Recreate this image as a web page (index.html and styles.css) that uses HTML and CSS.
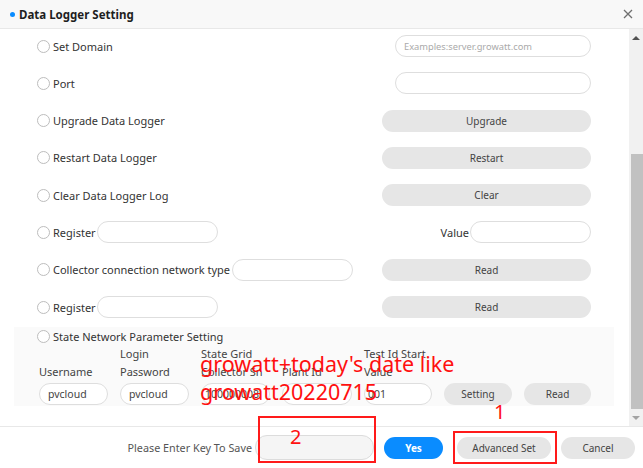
FILE: index.html
```html
<!DOCTYPE html>
<html>
<head>
<meta charset="utf-8">
<link rel="stylesheet" href="styles.css">
</head>
<body>
<div class="dialog">
  <header class="head">
    <span class="dot"></span>
    <span class="title">Data Logger Setting</span>
    <svg class="close" width="10" height="10" viewBox="0 0 10 10"><path d="M1 1L9 9M9 1L1 9" stroke="#6f6f6f" stroke-width="1.3" fill="none"/></svg>
  </header>
  <div class="main">
    <div class="content">
      <div class="row">
        <div class="left"><span class="radio"></span><span>Set Domain</span></div>
        <div class="field w196 ph">Examples:server.growatt.com</div>
      </div>
      <div class="row">
        <div class="left"><span class="radio"></span><span>Port</span></div>
        <div class="field w196"></div>
      </div>
      <div class="row">
        <div class="left"><span class="radio"></span><span>Upgrade Data Logger</span></div>
        <div class="btn w209">Upgrade</div>
      </div>
      <div class="row">
        <div class="left"><span class="radio"></span><span>Restart Data Logger</span></div>
        <div class="btn w209">Restart</div>
      </div>
      <div class="row">
        <div class="left"><span class="radio"></span><span>Clear Data Logger Log</span></div>
        <div class="btn w209">Clear</div>
      </div>
      <div class="row">
        <div class="left"><span class="radio"></span><span>Register</span><div class="field w121 ml1"></div></div>
        <div class="left"><span>Value</span><div class="field w121 ml1"></div></div>
      </div>
      <div class="row">
        <div class="left"><span class="radio"></span><span>Collector connection network type</span><div class="field w121 ml2"></div></div>
        <div class="btn w209">Read</div>
      </div>
      <div class="row last">
        <div class="left"><span class="radio"></span><span>Register</span><div class="field w121 ml1"></div></div>
        <div class="btn w209">Read</div>
      </div>
      <div class="section">
        <div class="left sec-head"><span class="radio"></span><span>State Network Parameter Setting</span></div>
        <div class="grid">
          <div class="cell"><div class="lbl">Username</div><div class="field box">pvcloud</div></div>
          <div class="cell"><div class="lbl">Login<br>Password</div><div class="field box">pvcloud</div></div>
          <div class="cell"><div class="lbl">State Grid<br>Collector Sn</div><div class="field box tight">100000008</div></div>
          <div class="cell"><div class="lbl">Plant Id</div><div class="field box"></div></div>
          <div class="cell"><div class="lbl">Test Id Start<br>Value</div><div class="field box tight">001</div></div>
          <div class="cell"><div class="btn">Setting</div></div>
          <div class="cell"><div class="btn">Read</div></div>
        </div>
      </div>
    </div>
    <div class="scrollbar">
      <div class="arrow"><span class="tri up"></span></div>
      <div class="track"></div>
      <div class="thumb"></div>
      <div class="arrow"><span class="tri down"></span></div>
    </div>
  </div>
  <footer class="foot">
    <span class="key-label">Please Enter Key To Save</span>
    <div class="key-input"></div>
    <div class="fbtn yes">Yes</div>
    <div class="fbtn adv">Advanced Set</div>
    <div class="fbtn cancel">Cancel</div>
  </footer>

  <div class="annot">growatt+today's date like<br>growatt20220715</div>
  <div class="mark mark1"></div>
  <div class="mark mark2"></div>
  <div class="num num1">1</div>
  <div class="num num2">2</div>
</div>
</body>
</html>
```
FILE: styles.css
```css
body {
  margin: 0;
  font-family: "Noto Sans", "Open Sans", sans-serif;
  color: #333;
  background: #fff;
}
.dialog {
  position: relative;
  width: 643px;
  height: 468px;
  display: flex;
  flex-direction: column;
  overflow: hidden;
  background: #fff;
}
.head {
  height: 28px;
  flex: none;
  border-bottom: 1px solid #e8e8e8;
  background: #f8f8f8;
  display: flex;
  align-items: center;
  padding: 0 10px 0 10px;
}
.dot {
  width: 5px;
  height: 5px;
  border-radius: 50%;
  background: #0a8cff;
  margin-right: 4px;
}
.title {
  flex: 1;
  font-weight: 700;
  font-size: 11.5px;
  color: #1e1e1e;
}

.main {
  height: 397px;
  flex: none;
  display: flex;
}
.content {
  flex: 1;
  padding: 6px 15px 0 14px;
  font-size: 11px;
}
.row {
  height: 22px;
  display: flex;
  align-items: center;
  justify-content: space-between;
  padding: 0 23px;
  margin-bottom: 15.3px;
}
.row.last { margin-bottom: 9px; }
.left {
  display: flex;
  align-items: center;
}
.radio {
  width: 13px;
  height: 13px;
  border: 1px solid #bdbdbd;
  border-radius: 50%;
  box-sizing: border-box;
  margin-right: 3px;
  background: #fff;
}
.field {
  height: 22px;
  border: 1px solid #dedede;
  border-radius: 11px;
  box-sizing: border-box;
  background: #fff;
  display: flex;
  align-items: center;
  padding-left: 8px;
  font-size: 10.5px;
  color: #444;
}
.ph { color: #aaa; font-size: 9.3px; }
.w196 { width: 196px; }
.w121 { width: 121px; }
.ml1 { margin-left: 1px; }
.ml2 { margin-left: 2px; }
.btn {
  height: 22px;
  border-radius: 11px;
  background: #e6e6e6;
  display: flex;
  align-items: center;
  justify-content: center;
  font-size: 10px;
  color: #444;
}
.w209 { width: 209px; }

.section {
  background: #fafafa;
  height: 79px;
  padding: 0 23px;
}
.sec-head { height: 18px; }
.grid {
  display: grid;
  grid-template-columns: 69px 69px 69px 70px 68px 68px 67px;
  column-gap: 12px;
  margin-left: 2px;
  align-items: end;
}
.lbl {
  height: 36px;
  line-height: 18px;
  display: flex;
  flex-direction: column;
  justify-content: flex-end;
  font-size: 11px;
  color: #444;
}
.box { margin-top: 2px; }
.tight { padding-left: 3px; }
.cell .btn { margin-top: 2px; }

.scrollbar {
  width: 14px;
  flex: none;
  background: #f1f1f1;
  display: flex;
  flex-direction: column;
}
.arrow {
  height: 17px;
  display: flex;
  align-items: center;
  justify-content: center;
}
.track { flex: 1; }
.thumb {
  height: 255px;
  margin-left: 2px;
  background: #c1c1c1;
}
.tri {
  width: 0;
  height: 0;
  border-left: 4px solid transparent;
  border-right: 4px solid transparent;
}
.tri.up { border-bottom: 4px solid #505050; }
.tri.down { border-top: 4px solid #a3a3a3; }

.foot {
  flex: 1;
  border-top: 1px solid #e8e8e8;
  display: flex;
  align-items: center;
  justify-content: flex-end;
  padding-right: 8px;
}
.key-label {
  font-size: 10.8px;
  color: #555;
  margin-right: 3px;
}
.key-input {
  width: 119px;
  height: 25px;
  border: 1px solid #dcdcdc;
  border-radius: 12px;
  background: #f5f5f5;
  box-sizing: border-box;
  margin-right: 10px;
}
.fbtn {
  height: 22px;
  border-radius: 11px;
  display: flex;
  align-items: center;
  justify-content: center;
  font-size: 10px;
  background: #e6e6e6;
  color: #444;
}
.yes {
  width: 59px;
  background: #0a8cff;
  color: #fff;
  font-weight: 700;
  margin-right: 14px;
}
.adv { width: 94px; margin-right: 10px; }
.cancel { width: 74px; }

.annot {
  position: absolute;
  left: 200px;
  top: 350px;
  color: #ff1010;
  font-size: 21.5px;
  line-height: 28px;
}
.mark {
  position: absolute;
  border: 2px solid #ff1a1a;
  box-sizing: border-box;
}
.mark1 { left: 453px; top: 431px; width: 104px; height: 33px; }
.mark2 { left: 258px; top: 416px; width: 118px; height: 47px; }
.num {
  position: absolute;
  color: #ff1010;
  font-size: 20px;
  line-height: 22px;
}
.num1 { left: 494px; top: 401px; }
.num2 { left: 290px; top: 426px; }
```
